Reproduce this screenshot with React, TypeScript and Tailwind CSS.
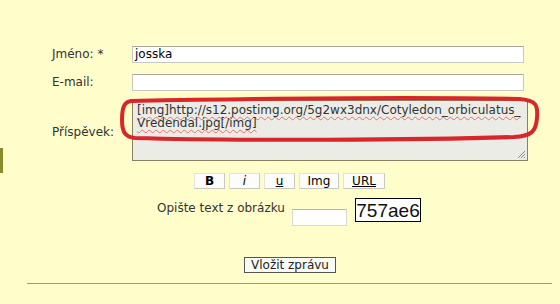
export default function App() {
  const font = { fontFamily: '"DejaVu Sans", Verdana, sans-serif' };
  const buttons = [
    { label: "B", cls: "font-bold w-[31px]" },
    { label: "i", cls: "italic w-[31px]" },
    { label: "u", cls: "underline w-[31px]" },
    { label: "Img", cls: "w-[40px]" },
    { label: "URL", cls: "underline w-[42px]" },
  ];

  return (
    <div
      className="relative w-[560px] h-[304px] bg-[#fffdc9] text-[12px] text-[#333] overflow-hidden pt-[45px]"
      style={font}
    >
      {/* olive page edge */}
      <div className="absolute left-0 top-[148px] w-[3px] h-[25px] bg-[#8a8a2a]" />

      <div className="flex items-center pl-[52px]">
        <label className="w-[80px]">Jméno: *</label>
        <div className="w-[392px] h-[17px] bg-white border border-[#c8c8c0] border-t-[#a8a8a0] px-[2px] text-black leading-[15px]">
          josska
        </div>
      </div>

      <div className="flex items-center pl-[52px] mt-[10px]">
        <label className="w-[80px]">E-mail:</label>
        <div className="w-[392px] h-[17px] bg-white border border-[#c8c8c0] border-t-[#a8a8a0]" />
      </div>

      <div className="relative flex items-center pl-[52px] mt-[9px]">
        <label className="w-[80px] pt-[2px]">Příspěvek:</label>
        <div className="relative w-[396px] h-[61px] bg-[#ecece6] border border-[#8a8060] px-[4px] pt-[3px] text-[#333] leading-[13px] whitespace-nowrap">
          <span className="underline decoration-wavy decoration-[#e87070] decoration-1 underline-offset-2">
            [img]http://s12.postimg.org/5g2wx3dnx/Cotyledon_orbiculatus_
          </span>
          <br />
          <span className="underline decoration-wavy decoration-[#e87070] decoration-1 underline-offset-2">
            Vredendal.jpg[/img]
          </span>
          <svg className="absolute right-[1px] bottom-[1px]" width="10" height="10" viewBox="0 0 10 10">
            <path d="M9 2 L2 9 M9 5 L5 9 M9 8 L8 9" stroke="#888" strokeWidth="1" />
          </svg>
        </div>
        <svg
          className="absolute left-[119px] top-[-4px] pointer-events-none"
          width="422"
          height="48"
          viewBox="0 0 422 48"
        >
          <path
            d="M12 5 C 120 3, 300 1, 400 3 C 418 4, 419 10, 418 22 C 417 36, 412 40, 395 41 C 300 44, 120 45, 16 42 C 6 41, 3 36, 3 24 C 3 12, 5 6, 12 5 Z"
            fill="none"
            stroke="#d8262a"
            strokeWidth="4"
          />
        </svg>
      </div>

      <div className="flex gap-[4px] pl-[194px] mt-[12px]">
        {buttons.map((b) => (
          <div
            key={b.label}
            className={`h-[16px] bg-[#fcfcfa] border border-[#e4e4dc] border-r-[#c8c8c0] border-b-[#c8c8c0] flex items-center justify-center text-black leading-none ${b.cls}`}
          >
            {b.label}
          </div>
        ))}
      </div>

      <div className="flex items-start pl-[157px] mt-[9px]">
        <span className="w-[135px] mt-[1px]">Opište text z obrázku</span>
        <div className="mt-[11px] w-[55px] h-[17px] bg-white border border-[#d8d8d0] border-t-[#b8b8b0]" />
        <div
          className="ml-[8px] w-[66px] h-[24px] bg-white border border-black flex items-center justify-center text-[19px] text-[#111] leading-none"
          style={{ fontFamily: '"Liberation Sans", Arial, sans-serif' }}
        >
          757ae6
        </div>
      </div>

      <div className="pl-[244px] mt-[31px]">
        <div className="w-[92px] h-[16px] bg-[#fbfbf6] border border-[#555] flex items-center justify-center text-[#222] leading-none">
          Vložit zprávu
        </div>
      </div>

      <div className="ml-[27px] w-[525px] mt-[10px] border-t border-[#999]" />
    </div>
  );
}
